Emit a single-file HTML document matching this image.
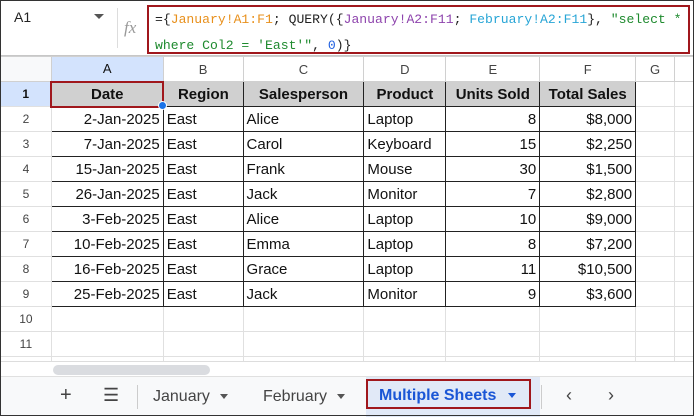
<!DOCTYPE html>
<html><head><style>
*{box-sizing:border-box;margin:0;padding:0}
body{width:694px;height:416px;overflow:hidden;background:#fff;font-family:"Liberation Sans",sans-serif;position:relative}
.frame{position:absolute;left:0;top:0;width:694px;height:416px;border:1px solid #333;pointer-events:none;z-index:10}
.fb{position:absolute;left:0;top:0;width:694px;height:56px;border-bottom:1px solid #c7c7c7;background:#fff}
.nm{position:absolute;left:14px;top:9px;font-size:14px;color:#222}
.arr{position:absolute;left:94px;top:14px;width:0;height:0;border-left:5px solid transparent;border-right:5px solid transparent;border-top:5px solid #555}
.sep{position:absolute;left:117px;top:8px;width:1px;height:40px;background:#ddd}
.fx{position:absolute;left:124px;top:18px;font-family:"Liberation Serif",serif;font-style:italic;color:#999;font-size:17px}
.fbox{position:absolute;left:147px;top:5px;width:543px;height:49px;border:2px solid #a0171c;font-family:"Liberation Mono",monospace;font-size:13.1px;color:#222;line-height:26px;padding:0 0 0 6px;white-space:nowrap;overflow:hidden}
.o{color:#e8901c}.p{color:#8e44ad}.c{color:#27a5d6}.g{color:#1e8a2e}.b{color:#2060e0}
table{position:absolute;left:0;top:56px;border-collapse:collapse;table-layout:fixed;font-size:15px}
td{border:1px solid #e0e0e0;height:25px;overflow:hidden;white-space:nowrap;padding:0 3px;color:#111}
td.rh{color:#444;font-size:12px;text-align:center;background:#fff}
tr.ch td{background:#fff;color:#444;font-size:13px;text-align:center;height:25px;border-color:#d0d0d0}
tr.ch td.sel,td.rh.sel{background:#d3e3fd;color:#111;font-weight:bold}
tr.ch td.sel{font-weight:normal}
.h td.d{background:#d0d0d0;font-weight:bold;text-align:center;border:1px solid #222}
.dat td.d{border:1px solid #222}
.r{text-align:right}
.scroll{position:absolute;left:0;top:361px;width:694px;height:15px;background:#fff;border-top:1px solid #ddd}
.thumb{position:absolute;left:53px;top:3px;width:157px;height:10px;background:#dadce0;border-radius:5px}
.tabs{position:absolute;left:0;top:376px;width:694px;height:40px;background:#f8f9fa;border-top:1px solid #e0e0e0;font-size:16px;color:#444}
.tabs span{position:absolute;top:11px}
.tri{display:inline-block;width:0;height:0;border-left:4px solid transparent;border-right:4px solid transparent;border-top:5px solid #555;vertical-align:middle;margin-left:10px}
.act{position:absolute;left:366px;top:2px;width:165px;height:30px;border:2px solid #a0171c;color:#1a56d6;font-weight:bold;padding:6px 0 0 11px;font-size:16px;white-space:nowrap}
.actbg{position:absolute;left:366px;top:0;width:174px;height:40px;background:#e1e9f7}
</style></head><body>
<div class="fb">
<div class="nm">A1</div><div class="arr"></div><div class="sep"></div><div class="fx">fx</div>
<div class="fbox">={<span class="o">January!A1:F1</span>; QUERY({<span class="p">January!A2:F11</span>; <span class="c">February!A2:F11</span>}, <span class="g">"select *</span><br><span class="g">where Col2 = 'East'"</span>, <span class="b">0</span>)}</div>
</div>
<table>
<colgroup><col style="width:51px"><col style="width:112px"><col style="width:80px"><col style="width:121px"><col style="width:82px"><col style="width:94px"><col style="width:96px"><col style="width:39px"><col style="width:19px"></colgroup>
<tr class="ch"><td style="background:#f8f9fa"></td><td class="sel">A</td><td>B</td><td>C</td><td>D</td><td>E</td><td>F</td><td>G</td><td></td></tr>
<tr class="h"><td class="rh sel">1</td><td class="d" style="border:2px solid #a0171c">Date</td><td class="d">Region</td><td class="d">Salesperson</td><td class="d">Product</td><td class="d">Units Sold</td><td class="d">Total Sales</td><td></td><td></td></tr>
<tr class="dat"><td class="rh">2</td><td class="d r">2-Jan-2025</td><td class="d">East</td><td class="d">Alice</td><td class="d">Laptop</td><td class="d r">8</td><td class="d r">$8,000</td><td></td><td></td></tr>
<tr class="dat"><td class="rh">3</td><td class="d r">7-Jan-2025</td><td class="d">East</td><td class="d">Carol</td><td class="d">Keyboard</td><td class="d r">15</td><td class="d r">$2,250</td><td></td><td></td></tr>
<tr class="dat"><td class="rh">4</td><td class="d r">15-Jan-2025</td><td class="d">East</td><td class="d">Frank</td><td class="d">Mouse</td><td class="d r">30</td><td class="d r">$1,500</td><td></td><td></td></tr>
<tr class="dat"><td class="rh">5</td><td class="d r">26-Jan-2025</td><td class="d">East</td><td class="d">Jack</td><td class="d">Monitor</td><td class="d r">7</td><td class="d r">$2,800</td><td></td><td></td></tr>
<tr class="dat"><td class="rh">6</td><td class="d r">3-Feb-2025</td><td class="d">East</td><td class="d">Alice</td><td class="d">Laptop</td><td class="d r">10</td><td class="d r">$9,000</td><td></td><td></td></tr>
<tr class="dat"><td class="rh">7</td><td class="d r">10-Feb-2025</td><td class="d">East</td><td class="d">Emma</td><td class="d">Laptop</td><td class="d r">8</td><td class="d r">$7,200</td><td></td><td></td></tr>
<tr class="dat"><td class="rh">8</td><td class="d r">16-Feb-2025</td><td class="d">East</td><td class="d">Grace</td><td class="d">Laptop</td><td class="d r">11</td><td class="d r">$10,500</td><td></td><td></td></tr>
<tr class="dat"><td class="rh">9</td><td class="d r">25-Feb-2025</td><td class="d">East</td><td class="d">Jack</td><td class="d">Monitor</td><td class="d r">9</td><td class="d r">$3,600</td><td></td><td></td></tr>
<tr><td class="rh">10</td><td></td><td></td><td></td><td></td><td></td><td></td><td></td><td></td></tr>
<tr><td class="rh">11</td><td></td><td></td><td></td><td></td><td></td><td></td><td></td><td></td></tr>
<tr><td class="rh">12</td><td></td><td></td><td></td><td></td><td></td><td></td><td></td><td></td></tr>
</table>
<div style="position:absolute;left:158px;top:101px;width:9px;height:9px;border-radius:50%;background:#1a73e8;border:1px solid #fff"></div>
<div class="scroll"><div class="thumb"></div></div>
<div class="tabs">
<div style="position:absolute;left:137px;top:8px;width:1px;height:24px;background:#ccc"></div>
<div style="position:absolute;left:541px;top:8px;width:1px;height:24px;background:#ccc"></div>
<div class="actbg"></div>
<span style="left:60px;font-size:20px;top:7px">+</span>
<span style="left:103px;font-size:18px;top:8px">☰</span>
<span style="left:153px">January<i class="tri"></i></span>
<span style="left:263px">February<i class="tri"></i></span>
<div class="act">Multiple Sheets<i class="tri" style="border-top-color:#1a56d6;margin-left:12px"></i></div>
<span style="left:566px;font-size:18px;top:8px">‹</span>
<span style="left:608px;font-size:18px;top:8px">›</span>
</div>
<div class="frame"></div>
</body></html>
